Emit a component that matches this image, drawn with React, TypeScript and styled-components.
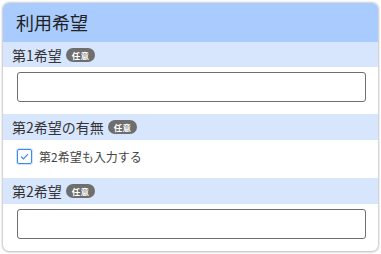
import React, { useState } from 'react'
import styled, { createGlobalStyle } from 'styled-components'

const GlobalStyle = createGlobalStyle`
  html, body {
    margin: 0;
    padding: 0;
    background: #ffffff;
  }
  body {
    font-family: 'Noto Sans CJK JP', 'Noto Sans', sans-serif;
    color: #333333;
  }
`

const Page = styled.div`
  padding: 3px;
`

const Card = styled.section`
  height: 248px;
  box-sizing: border-box;
  background: #ffffff;
  border-radius: 6px;
  overflow: hidden;
  box-shadow: 0 0 2px 1px rgba(0, 0, 0, 0.18), 0 1px 3px rgba(0, 0, 0, 0.12);
  display: flex;
  flex-direction: column;
`

const Header = styled.h2`
  margin: 0;
  height: 39px;
  padding: 0 13px;
  display: flex;
  align-items: center;
  background: #a9cbfd;
  font-size: 18px;
  font-weight: 400;
  color: #222222;
`

const LabelRow = styled.div`
  height: 26px;
  padding: 0 9px;
  display: flex;
  align-items: center;
  gap: 4px;
  background: #d7e6fd;
  font-size: 14px;
  color: #333333;
`

const Badge = styled.span`
  display: inline-flex;
  align-items: center;
  justify-content: center;
  height: 14px;
  padding: 0 6px;
  border-radius: 7px;
  background: #6e6e6e;
  color: #ffffff;
  font-size: 8.5px;
  font-weight: 700;
  letter-spacing: 0.3px;
`

const Body = styled.div<{ $top: number; $bottom: number }>`
  padding: ${({ $top }) => $top}px 12px ${({ $bottom }) => $bottom}px 14px;
`

const TextInput = styled.input`
  display: block;
  box-sizing: border-box;
  width: 100%;
  height: 30px;
  margin: 0;
  border: 1px solid #6f6f6f;
  border-radius: 3px;
  background: #ffffff;
  outline: none;
  font-size: 14px;
`

const CheckLabel = styled.label`
  display: flex;
  align-items: center;
  gap: 7px;
  height: 15px;
  font-size: 12px;
  line-height: 15px;
  color: #444444;
  cursor: pointer;
`

const Box = styled.span`
  width: 15px;
  height: 15px;
  box-sizing: border-box;
  border: 1.5px solid #3a8af0;
  border-radius: 2px;
  box-shadow: 0 0 0 1px #cfe2ff;
  display: flex;
  align-items: center;
  justify-content: center;
  background: #ffffff;
`

const Field = ({ label }: { label: string }) => (
  <>
    <LabelRow>
      {label}
      <Badge>任意</Badge>
    </LabelRow>
    <Body $top={5} $bottom={12}>
      <TextInput type="text" />
    </Body>
  </>
)

const App = () => {
  const [checked, setChecked] = useState(true)

  return (
    <>
      <GlobalStyle />
      <Page>
        <Card>
          <Header>利用希望</Header>
          <Field label="第1希望" />
          <LabelRow>
            第2希望の有無
            <Badge>任意</Badge>
          </LabelRow>
          <Body $top={9} $bottom={14}>
            <CheckLabel onClick={() => setChecked(!checked)}>
              <Box>
                {checked && (
                  <svg width="9" height="7" viewBox="0 0 9 7">
                    <path
                      d="M1 3.6 L3.4 5.8 L8 1.2"
                      fill="none"
                      stroke="#3a8af0"
                      strokeWidth="1.2"
                    />
                  </svg>
                )}
              </Box>
              第2希望も入力する
            </CheckLabel>
          </Body>
          <Field label="第2希望" />
        </Card>
      </Page>
    </>
  )
}

export default App
